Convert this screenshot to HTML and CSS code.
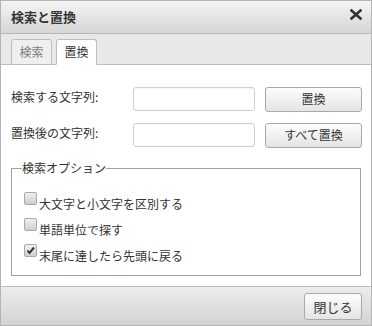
FILE: index.html
```html
<!DOCTYPE html>
<html lang="ja">
<head>
<meta charset="utf-8">
<link rel="stylesheet" href="styles.css">
</head>
<body>
<div class="dialog">
  <div class="titlebar">
    <span class="title">検索と置換</span>
    <svg class="close" width="12" height="11" viewBox="0 0 12 11"><path d="M1.5 1.5 L10.5 9.5 M10.5 1.5 L1.5 9.5" stroke="#333" stroke-width="2.6" stroke-linecap="square"/></svg>
  </div>
  <div class="tabs">
    <div class="tab">検索</div>
    <div class="tab active">置換</div>
  </div>
  <div class="content">
    <div class="row">
      <span class="label">検索する文字列:</span>
      <input class="field" type="text">
      <button class="btn wide">置換</button>
    </div>
    <div class="row">
      <span class="label">置換後の文字列:</span>
      <input class="field" type="text">
      <button class="btn wide">すべて置換</button>
    </div>
    <fieldset class="options">
      <legend>検索オプション</legend>
      <div class="opt"><span class="cb"></span><span class="opt-text">大文字と小文字を区別する</span></div>
      <div class="opt"><span class="cb"></span><span class="opt-text">単語単位で探す</span></div>
      <div class="opt"><span class="cb"><svg width="11" height="11" viewBox="0 0 11 11"><path d="M2.5 5.5 L4.5 8 L9 2.5" fill="none" stroke="#333" stroke-width="2"/></svg></span><span class="opt-text">末尾に達したら先頭に戻る</span></div>
    </fieldset>
  </div>
  <div class="footer">
    <button class="btn close-btn">閉じる</button>
  </div>
</div>
</body>
</html>
```
FILE: styles.css
```css
* { box-sizing: border-box; }
html, body { margin: 0; padding: 0; background: #fff; }
body {
  font-family: "Noto Sans CJK JP", "Noto Sans", sans-serif;
  font-size: 12px;
  color: #333;
}
.dialog {
  width: 372px;
  height: 326px;
  border: 1px solid #b4b4b4;
  display: flex;
  flex-direction: column;
  background: #fff;
}
.titlebar {
  height: 33px;
  flex: none;
  background: linear-gradient(#f4f4f4, #d6d6d6);
  border-bottom: 1px solid #b8b8b8;
  display: flex;
  align-items: center;
  justify-content: space-between;
  padding: 0 9px 0 10px;
}
.title {
  font-size: 13px;
  font-weight: bold;
  color: #333;
  line-height: 16px;
}
.close {
  align-self: flex-start;
  margin-top: 8px;
}
.tabs {
  height: 31px;
  flex: none;
  background: #e8e8e8;
  border-bottom: 1px solid #bdbdbd;
  display: flex;
  align-items: flex-end;
  gap: 4px;
  padding-left: 10px;
}
.tab {
  width: 41px;
  height: 26px;
  margin-bottom: -1px;
  border: 1px solid #bdbdbd;
  border-radius: 3px 3px 0 0;
  background: #efefef;
  color: #7d7d7d;
  text-align: center;
  line-height: 24px;
  font-size: 12px;
}
.tab.active {
  background: #fff;
  border-bottom-color: #fff;
  color: #333;
}
.content {
  flex: 1;
  padding: 21px 9px 0 9px;
  border-bottom: 1px solid #bdbdbd;
}
.row {
  display: flex;
  align-items: center;
  height: 25px;
  margin-bottom: 11px;
}
.label {
  width: 123px;
  padding-left: 1px;
  line-height: 16px;
  margin-top: -4px;
}
.field {
  width: 122px;
  height: 24px;
  border: 1px solid #cfcfcf;
  border-radius: 3px;
  margin: 0 10px 0 0;
  padding: 0 4px;
  font: inherit;
  background: #fff;
  box-shadow: inset 0 1px 1px rgba(0,0,0,0.04);
}
.btn {
  font-family: inherit;
  font-size: 12px;
  color: #333;
  background: linear-gradient(#fdfdfd, #e4e4e4);
  border: 1px solid #a9a9a9;
  border-radius: 3px;
  padding: 0;
  height: 25px;
  line-height: 22px;
}
.wide { width: 97px; margin-top: 1px; }
.options {
  margin: 13px 1px 0 1px;
  padding: 15px 9px 6px 10px;
  border: 1px solid #a0a0a0;
  min-width: 0;
}
.options legend {
  padding: 0;
  margin-left: 0;
  line-height: 16px;
}
.opt {
  display: flex;
  align-items: flex-start;
  height: 26px;
  margin-left: 2px;
}
.cb {
  width: 13px;
  height: 13px;
  margin-top: 1px;
  border: 1px solid #a8a8a8;
  border-radius: 2px;
  background: linear-gradient(#f0f0f0, #cfcfcf);
  display: flex;
  align-items: center;
  justify-content: center;
  flex: none;
}
.cb svg { display: block; }
.opt-text {
  margin-left: 2px;
  margin-top: 6px;
  line-height: 14px;
}
.footer {
  height: 38px;
  flex: none;
  background: linear-gradient(#ececec, #d3d3d3);
  display: flex;
  align-items: center;
  justify-content: flex-end;
  padding: 0 9px 0 0;
}
.close-btn {
  width: 58px;
  height: 27px;
  margin-top: 1px;
  font-size: 13px;
  line-height: 24px;
}
```
